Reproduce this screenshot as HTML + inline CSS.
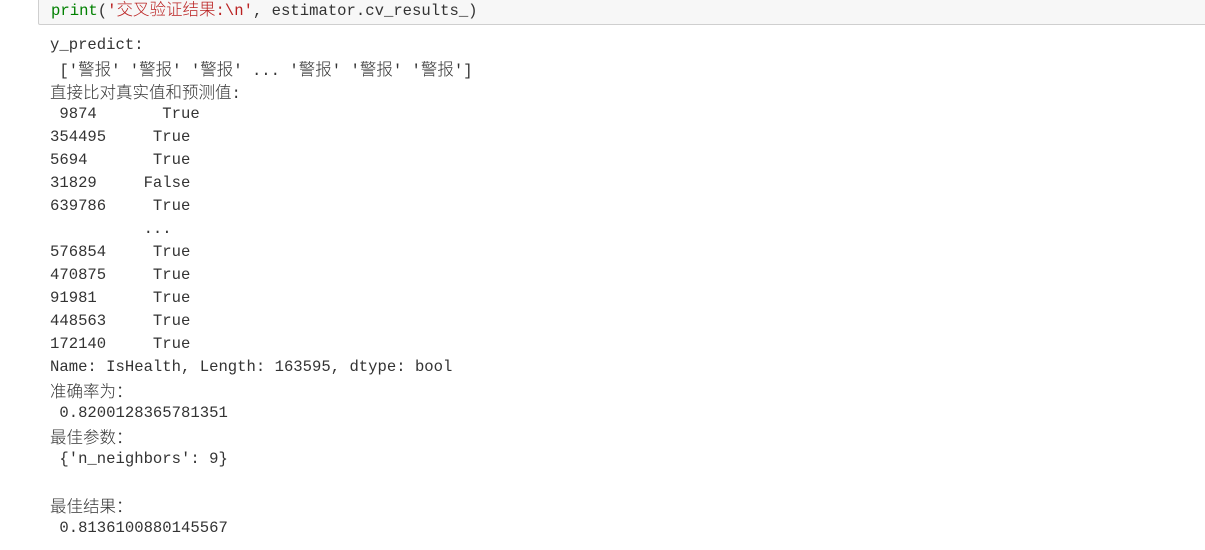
<!DOCTYPE html>
<html><head><meta charset="utf-8"><style>
body{margin:0;width:1205px;height:550px;background:#fff;overflow:hidden;position:relative}
.inp{position:absolute;left:38px;top:-10px;width:1180px;height:33px;background:#f7f7f7;border:1px solid #cfcfcf;border-radius:2px}
.inp div{position:absolute;left:12px;top:6px;white-space:pre;font:15.6px/23px "Liberation Mono","Noto Sans CJK SC",monospace;color:#333}
.out{position:absolute;left:50px;top:34px;font:15.6px/23px "Liberation Mono","Noto Sans CJK SC",monospace;color:#333}
.out div{height:23px;white-space:pre;overflow:visible}
.c{font-family:"Noto Sans CJK SC",sans-serif;font-size:16.5px;line-height:23px;font-weight:300}
.g{color:#008000}.r{color:#ba2121}
</style></head><body>
<div class="inp"><div><span class="g">print</span>(<span class="r">'<span class="c">交叉验证结果</span>:\n'</span>, estimator.cv_results_)</div></div>
<div class="out">
<div>y_predict:</div>
<div> ['<span class="c">警报</span>' '<span class="c">警报</span>' '<span class="c">警报</span>' ... '<span class="c">警报</span>' '<span class="c">警报</span>' '<span class="c">警报</span>']</div>
<div><span class="c">直接比对真实值和预测值</span>:</div>
<div> 9874       True</div>
<div>354495     True</div>
<div>5694       True</div>
<div>31829     False</div>
<div>639786     True</div>
<div>          ...</div>
<div>576854     True</div>
<div>470875     True</div>
<div>91981      True</div>
<div>448563     True</div>
<div>172140     True</div>
<div>Name: IsHealth, Length: 163595, dtype: bool</div>
<div><span class="c">准确率为：</span></div>
<div> 0.8200128365781351</div>
<div><span class="c">最佳参数：</span></div>
<div> {'n_neighbors': 9}</div>
<div></div>
<div><span class="c">最佳结果：</span></div>
<div> 0.8136100880145567</div>
</div>
</body></html>
